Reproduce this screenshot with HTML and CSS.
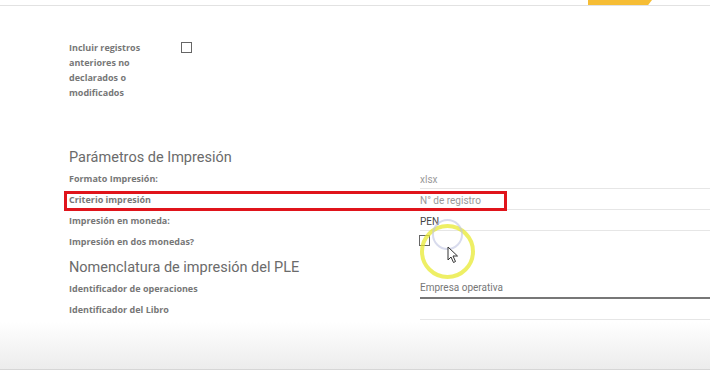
FILE: index.html
```html
<!DOCTYPE html>
<html lang="es">
<head>
    <meta charset="UTF-8">
    <title>Parámetros de Impresión</title>
    <link rel="stylesheet" href="styles.css">
</head>
<body>
    <div class="topbar">
        <div class="tab"></div>
    </div>

    <div class="page">
        <div class="check-row">
            <label class="check-label">Incluir registros anteriores no declarados o modificados</label>
            <span class="box"></span>
        </div>

        <h2 class="section-title">Parámetros de Impresión</h2>
        <div class="row">
            <span class="label">Formato Impresión:</span>
            <span class="value muted">xlsx</span>
        </div>
        <div class="row marked">
            <span class="label">Criterio impresión</span>
            <span class="value muted">N° de registro</span>
        </div>
        <div class="row">
            <span class="label">Impresión en moneda:</span>
            <span class="value dark">PEN</span>
        </div>
        <div class="row">
            <span class="label">Impresión en dos monedas?</span>
            <span class="value plain"><span class="box"></span></span>
        </div>

        <h2 class="section-title second">Nomenclatura de impresión del PLE</h2>
        <div class="row">
            <span class="label">Identificador de operaciones</span>
            <span class="value focus">Empresa operativa</span>
        </div>
        <div class="row">
            <span class="label">Identificador del Libro</span>
            <span class="value"></span>
        </div>
    </div>

    <div class="footer"></div>

    <!-- screen recorder click highlight -->
    <div class="click-ring"></div>
    <div class="click-dot"></div>
    <svg class="cursor" width="12" height="18" viewBox="0 0 12 18">
        <path d="M1 1 L1 14 L4 11 L6.5 16.5 L8.5 15.5 L6 10 L10.5 10 Z" fill="#fff" stroke="#333" stroke-width="1"/>
    </svg>
</body>
</html>
```

FILE: styles.css
```css
body {
    margin: 0;
    font-family: Roboto, "Open Sans", sans-serif;
    background-color: #fff;
    color: #666;
    overflow: hidden;
}
.topbar {
    height: 5px;
    border-bottom: 1px solid #e2e2e2;
    position: relative;
}
.tab {
    position: absolute;
    left: 588px;
    top: 0;
    width: 64px;
    height: 5px;
    background-color: #f6bd35;
    clip-path: polygon(0 0, 100% 0, 94% 100%, 0 100%);
}
.page {
    padding: 34px 0 0 69px;
    height: 282px;
}
.check-row {
    display: flex;
    align-items: flex-start;
    height: 108px;
}
.check-label {
    width: 82px;
    margin-right: 30px;
    font-family: "Open Sans", sans-serif;
    font-size: 9px;
    font-weight: bold;
    line-height: 15px;
    color: #777;
}
.box {
    display: inline-block;
    width: 9px;
    height: 9px;
    border: 1px solid #666;
    margin-top: 2px;
}
.section-title {
    margin: 0;
    font-size: 14.5px;
    font-weight: normal;
    color: #6b6b6b;
    height: 20px;
    line-height: 20px;
}
.section-title.second {
    margin-top: 6px;
}
.row {
    display: flex;
    align-items: center;
    height: 21px;
    position: relative;
}
.label {
    width: 351px;
    font-family: "Open Sans", sans-serif;
    font-size: 9px;
    font-weight: bold;
    color: #777;
}
.value {
    flex: 1;
    height: 20px;
    line-height: 24px;
    border-bottom: 1px solid #e6e6e6;
    font-size: 10px;
    color: #777;
}
.value.muted {
    color: #999;
}
.value.dark {
    color: #444;
}
.value.plain {
    border-bottom: none;
    line-height: 20px;
}
.value.plain .box {
    vertical-align: middle;
    margin: -3px 0 0 -1px;
}
.value.focus {
    border-bottom: 2px solid #777;
    height: 19px;
    line-height: 20px;
    color: #777;
}
.marked::before {
    content: "";
    position: absolute;
    left: -5px;
    top: 2px;
    width: 437px;
    height: 14px;
    border: 3px solid #e0141b;
}
.footer {
    height: 47px;
    background: linear-gradient(#fff, #ececec);
    border-bottom: 1px solid #d6d6d6;
}
.click-ring {
    position: absolute;
    left: 420px;
    top: 224px;
    width: 47px;
    height: 47px;
    border: 4px solid rgba(232, 234, 50, 0.75);
    border-radius: 50%;
}
.click-dot {
    position: absolute;
    left: 432px;
    top: 219px;
    width: 27px;
    height: 27px;
    border: 2px solid rgba(190, 195, 225, 0.6);
    border-radius: 50%;
}
.cursor {
    position: absolute;
    left: 447px;
    top: 246px;
}
```
